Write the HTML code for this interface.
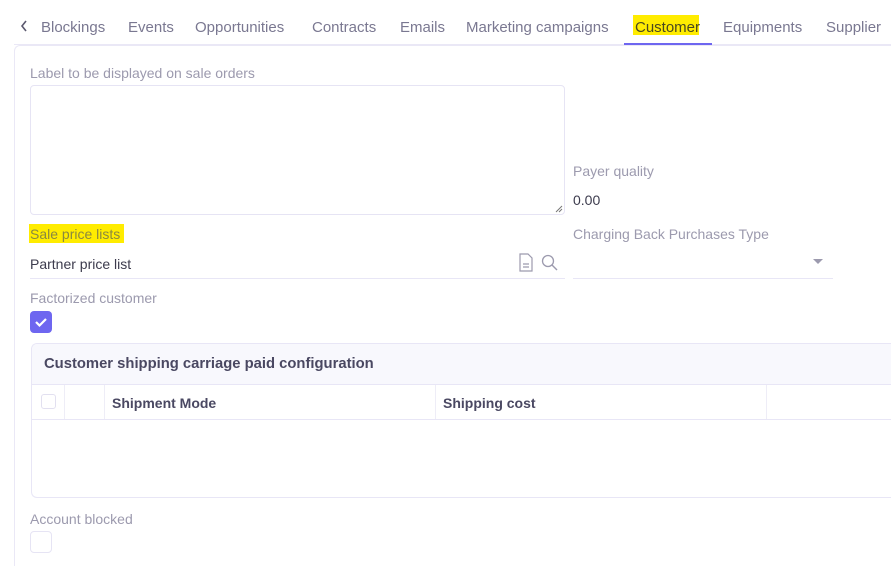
<!DOCTYPE html>
<html><head><meta charset="utf-8"><style>
*{margin:0;padding:0;box-sizing:border-box}
html,body{width:891px;height:566px;overflow:hidden}
body{background:#fff;font-family:"Liberation Sans",sans-serif;position:relative}
.a{position:absolute;white-space:nowrap}
.tab{position:absolute;top:18px;font-size:15px;color:#7a7891;line-height:20px}
.lbl{font-size:14px;color:#9c9aae;line-height:18px}
.val{font-size:14px;color:#3c3b4d;line-height:18px}
.th{font-size:14px;font-weight:bold;color:#4a4862}
</style></head><body>
<svg class="a" style="left:19px;top:19px" width="10" height="14" viewBox="0 0 10 14"><path d="M7 2L3 7l4 5" stroke="#5a586e" stroke-width="1.6" fill="none"/></svg>
<div class="tab" style="left:41px">Blockings</div>
<div class="tab" style="left:128px">Events</div>
<div class="tab" style="left:195px">Opportunities</div>
<div class="tab" style="left:312px">Contracts</div>
<div class="tab" style="left:400px">Emails</div>
<div class="tab" style="left:466px">Marketing campaigns</div>
<div class="a" style="left:633px;top:15px;width:66px;height:20px;background:#ffec00"></div>
<div class="tab" style="left:635px;color:#4a4820">Customer</div>
<div class="tab" style="left:723px">Equipments</div>
<div class="tab" style="left:826px">Supplier</div>
<div class="a" style="left:14px;top:44px;width:877px;height:1px;background:#eae8f6"></div>
<div class="a" style="left:624px;top:43px;width:88px;height:2px;background:#6e66f0"></div>
<div class="a" style="left:14px;top:45px;width:877px;height:521px;border:1px solid #eae8f6;border-right:none;border-bottom:none;border-radius:6px 0 0 0"></div>

<div class="a lbl" style="left:30px;top:64px">Label to be displayed on sale orders</div>
<div class="a" style="left:30px;top:85px;width:535px;height:130px;border:1px solid #e6e4f4;border-radius:4px"></div>
<svg class="a" style="left:555px;top:205px" width="8" height="8"><path d="M1 7L7 1M4 7L7 4" stroke="#777" stroke-width="1"/></svg>

<div class="a lbl" style="left:573px;top:162px">Payer quality</div>
<div class="a val" style="left:573px;top:191px">0.00</div>

<div class="a" style="left:29px;top:224px;width:95px;height:19px;background:#ffec00"></div>
<div class="a lbl" style="left:30px;top:225px;color:#8a8840">Sale price lists</div>
<div class="a val" style="left:30px;top:255px">Partner price list</div>
<div class="a" style="left:30px;top:278px;width:535px;height:1px;background:#e8e6f6"></div>
<svg class="a" style="left:518px;top:253px" width="44" height="20"><path d="M2 1h8l4 4v13H2z" stroke="#9c9aae" fill="none" stroke-width="1.2"/><path d="M5 11h6M5 14h6" stroke="#9c9aae" stroke-width="1.2"/><circle cx="30" cy="8" r="5.5" stroke="#9c9aae" fill="none" stroke-width="1.3"/><path d="M34 12l5 5" stroke="#9c9aae" stroke-width="1.4"/></svg>

<div class="a lbl" style="left:573px;top:225px">Charging Back Purchases Type</div>
<div class="a" style="left:573px;top:278px;width:260px;height:1px;background:#e8e6f6"></div>
<svg class="a" style="left:813px;top:259px" width="10" height="6"><path d="M0 0h10L5 5z" fill="#9c9aae"/></svg>

<div class="a lbl" style="left:30px;top:289px">Factorized customer</div>
<div class="a" style="left:30px;top:311px;width:22px;height:22px;background:#6e66f0;border-radius:4px"></div>
<svg class="a" style="left:30px;top:311px" width="22" height="22"><path d="M6 11l3.5 3.5L16 8" stroke="#fff" stroke-width="2.2" fill="none"/></svg>

<div class="a" style="left:31px;top:343px;width:860px;height:155px;border:1px solid #e8e6f6;border-right:none;border-radius:6px 0 0 6px;overflow:hidden">
 <div class="a" style="left:0;top:0;width:880px;height:41px;background:#f8f8fd;border-bottom:1px solid #e8e6f6"></div>
 <div class="a th" style="left:12px;top:12px;font-size:14.8px">Customer shipping carriage paid configuration</div>
 <div class="a" style="left:0;top:75px;width:880px;height:1px;background:#e8e6f6"></div>
 <div class="a" style="left:32px;top:41px;width:1px;height:34px;background:#eeedf7"></div>
 <div class="a" style="left:72px;top:41px;width:1px;height:34px;background:#eeedf7"></div>
 <div class="a" style="left:403px;top:41px;width:1px;height:34px;background:#eeedf7"></div>
 <div class="a" style="left:734px;top:41px;width:1px;height:34px;background:#eeedf7"></div>
 <div class="a" style="left:9px;top:50px;width:15px;height:15px;border:1px solid #e2e0f0;border-radius:3px"></div>
 <div class="a th" style="left:80px;top:51px">Shipment Mode</div>
 <div class="a th" style="left:411px;top:51px">Shipping cost</div>
</div>

<div class="a lbl" style="left:30px;top:510px">Account blocked</div>
<div class="a" style="left:30px;top:531px;width:22px;height:22px;border:1px solid #e6e4f4;border-radius:4px"></div>
</body></html>
